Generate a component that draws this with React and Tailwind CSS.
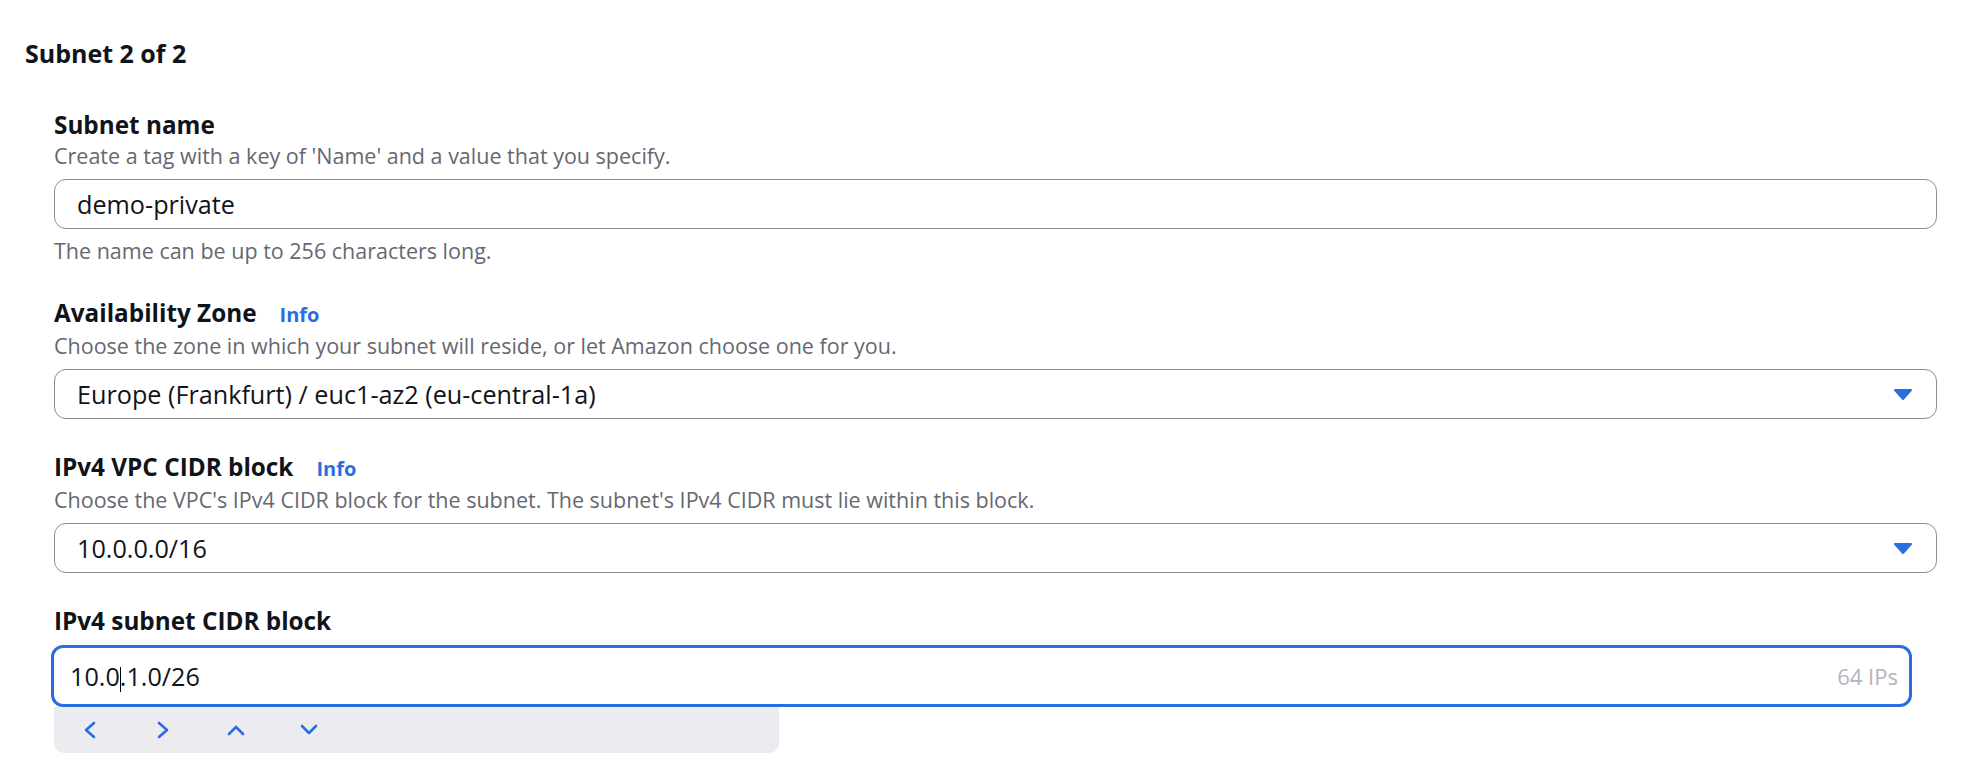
import React from "react";

const BLUE = "#2a6ddf";

function Caret() {
  return (
    <svg width="20" height="13" viewBox="0 0 20 13" aria-hidden>
      <path d="M2 2 H18 L10 11 Z" fill={BLUE} stroke={BLUE} strokeWidth="2" strokeLinejoin="round" />
    </svg>
  );
}

function Chevron({ points }) {
  return (
    <button type="button" className="flex h-[20px] w-[20px] items-center justify-center">
      <svg width="20" height="20" viewBox="0 0 20 20" fill="none" aria-hidden>
        <polyline points={points} stroke={BLUE} strokeWidth="2.6" strokeLinecap="round" strokeLinejoin="round" />
      </svg>
    </button>
  );
}

function Field({ label, info, description, constraint, children }) {
  return (
    <div>
      <div className="flex items-baseline gap-[23px]">
        <span className="text-[24.3px] font-bold leading-[32px]">{label}</span>
        {info && <a className="cursor-pointer text-[20px] font-bold leading-[32px] text-[#2a6ddf]">Info</a>}
      </div>
      {description && <p className="mt-[1px] text-[21.5px] leading-[28px] text-[#656871]">{description}</p>}
      <div className={description ? "mt-[9px]" : "mt-[8px]"}>{children}</div>
      {constraint && <p className="mt-[8px] text-[21.5px] leading-[28px] text-[#656871]">{constraint}</p>}
    </div>
  );
}

function TextBox({ value }) {
  return (
    <div className="flex h-[50px] items-center rounded-[12px] border border-[#8c8c94] pl-[22px] text-[25.2px] leading-[34px]">
      {value}
    </div>
  );
}

function SelectBox({ value }) {
  return (
    <div className="flex h-[50px] cursor-pointer items-center justify-between rounded-[12px] border border-[#8c8c94] pl-[22px] pr-[23px] text-[25.2px] leading-[34px]">
      <span>{value}</span>
      <Caret />
    </div>
  );
}

function CidrInput() {
  return (
    <div>
      <div className="-ml-[3px] mr-[25px] flex h-[62px] items-center rounded-[12px] border-[3px] border-[#2a6ddf] pl-[16px] pr-[11px]">
        <span className="text-[25.2px] leading-[34px]">
          10.0
          <span className="-mr-px inline-block h-[25px] w-px bg-black align-middle" />
          .1.0/26
        </span>
        <span className="ml-auto text-[22px] leading-[30px] text-[#b4b4bb]">64 IPs</span>
      </div>
      <div className="flex h-[46px] w-[725px] items-center gap-[53px] rounded-b-[10px] bg-[#ebebf0] pl-[26px]">
        <Chevron points="14,3 6,10 14,17" />
        <Chevron points="6,3 14,10 6,17" />
        <Chevron points="3,14 10,7 17,14" />
        <Chevron points="3,6 10,13 17,6" />
      </div>
    </div>
  );
}

export default function App() {
  return (
    <div className="min-h-screen bg-white px-[25px] pt-[37px] font-['Open_Sans',sans-serif] text-[#0f141a]">
      <h2 className="text-[25px] font-bold leading-[32px]">Subnet 2 of 2</h2>
      <div className="ml-[29px] mt-[40px] flex flex-col gap-[32px]">
        <Field
          label="Subnet name"
          description="Create a tag with a key of 'Name' and a value that you specify."
          constraint="The name can be up to 256 characters long."
        >
          <TextBox value="demo-private" />
        </Field>
        <Field
          label="Availability Zone"
          info
          description="Choose the zone in which your subnet will reside, or let Amazon choose one for you."
        >
          <SelectBox value="Europe (Frankfurt) / euc1-az2 (eu-central-1a)" />
        </Field>
        <Field
          label="IPv4 VPC CIDR block"
          info
          description="Choose the VPC's IPv4 CIDR block for the subnet. The subnet's IPv4 CIDR must lie within this block."
        >
          <SelectBox value="10.0.0.0/16" />
        </Field>
        <Field label="IPv4 subnet CIDR block">
          <CidrInput />
        </Field>
      </div>
    </div>
  );
}
